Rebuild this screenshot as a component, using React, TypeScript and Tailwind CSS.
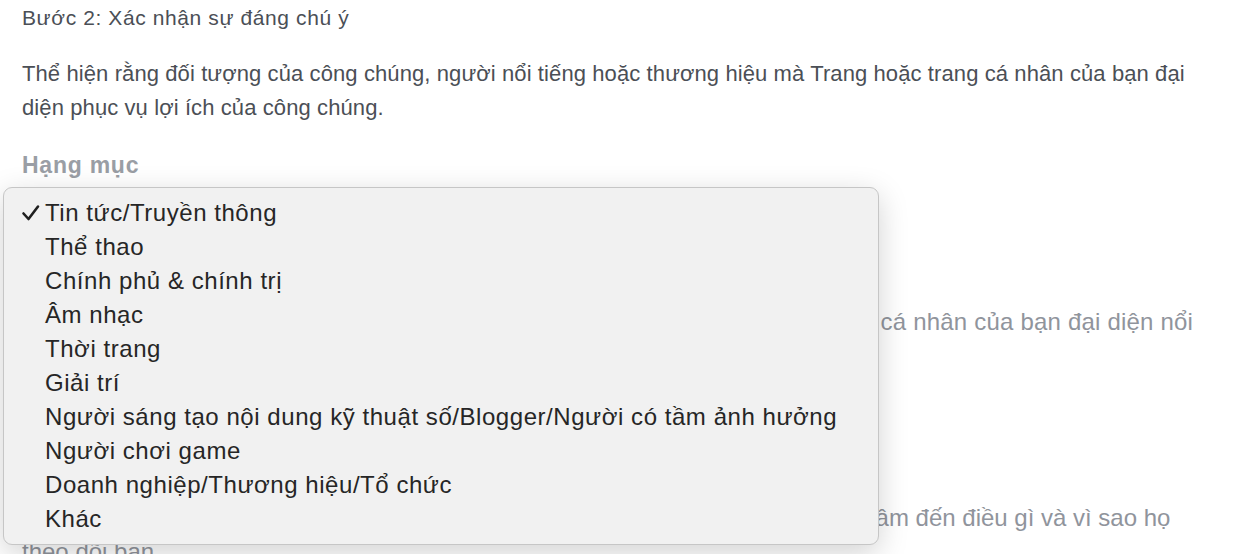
import React from "react";

const options = [
  "Tin tức/Truyền thông",
  "Thể thao",
  "Chính phủ & chính trị",
  "Âm nhạc",
  "Thời trang",
  "Giải trí",
  "Người sáng tạo nội dung kỹ thuật số/Blogger/Người có tầm ảnh hưởng",
  "Người chơi game",
  "Doanh nghiệp/Thương hiệu/Tổ chức",
  "Khác",
];

const CheckIcon = () => (
  <svg width="20" height="18" viewBox="0 0 20 18" className="shrink-0">
    <path
      d="M2.5 9.5 L7.5 15 L17 2.5"
      fill="none"
      stroke="#1f1f1f"
      strokeWidth="2.6"
      strokeLinecap="round"
      strokeLinejoin="round"
    />
  </svg>
);

export default function App() {
  const selected = 0;

  return (
    <div
      className="relative w-[1238px] h-[554px] overflow-hidden bg-white"
      style={{ fontFamily: '"Liberation Sans", Arial, sans-serif' }}
    >
      <div className="px-[22px] pt-[4px] tracking-[0.1px] whitespace-nowrap">
        <h2 className="text-[21px] leading-[28px] tracking-[0.6px] text-[#4b4f56]">
          Bước 2: Xác nhận sự đáng chú ý
        </h2>
        <p className="mt-[25px] text-[22px] leading-[34px] text-[#4b4f56]">
          Thể hiện rằng đối tượng của công chúng, người nổi tiếng hoặc thương
          hiệu mà Trang hoặc trang cá nhân của bạn đại
          <br />
          diện phục vụ lợi ích của công chúng.
        </p>
        <div className="mt-[25px] text-[23px] leading-[30px] font-bold tracking-[0.75px] text-[#9a9ea5]">
          Hạng mục
        </div>

        <p className="mt-[125px] text-[24px] leading-[34px] tracking-[0.2px] text-[#90949c]">
          Thêm link đến các bài viết, bài báo khác nói về đối tượng mà Trang
          hoặc trang cá nhân của bạn đại diện nổi
          <br />
          bật.
        </p>
        <div className="mt-[18px] text-[22px] leading-[34px] text-[#90949c]">
          Đối tượng
        </div>
        <div className="mt-[12px] text-[22px] leading-[34px] text-[#90949c]">
          Mô tả đối tượng
        </div>
        <p className="mt-[30px] text-[24px] leading-[34px] tracking-[0px] text-[#90949c]">
          Mô tả người theo dõi Trang hoặc trang cá nhân của bạn, những người ấy
          quan tâm đến điều gì và vì sao họ
          <br />
          theo dõi bạn
        </p>
      </div>

      <div className="absolute left-[3px] top-[187px] w-[876px] h-[358px] rounded-[9px] border border-[#c6c6c6] bg-[#f1f1f1] shadow-[0_8px_30px_rgba(0,0,0,0.18)] pt-[8px] tracking-[0.55px]">
        <ul>
          {options.map((opt, i) => (
            <li
              key={opt}
              className="flex items-center h-[34px] text-[24px] text-[#262626]"
            >
              <span className="w-[41px] flex justify-end pr-[4px]">
                {i === selected && <CheckIcon />}
              </span>
              <span className="whitespace-nowrap">{opt}</span>
            </li>
          ))}
        </ul>
      </div>
    </div>
  );
}
